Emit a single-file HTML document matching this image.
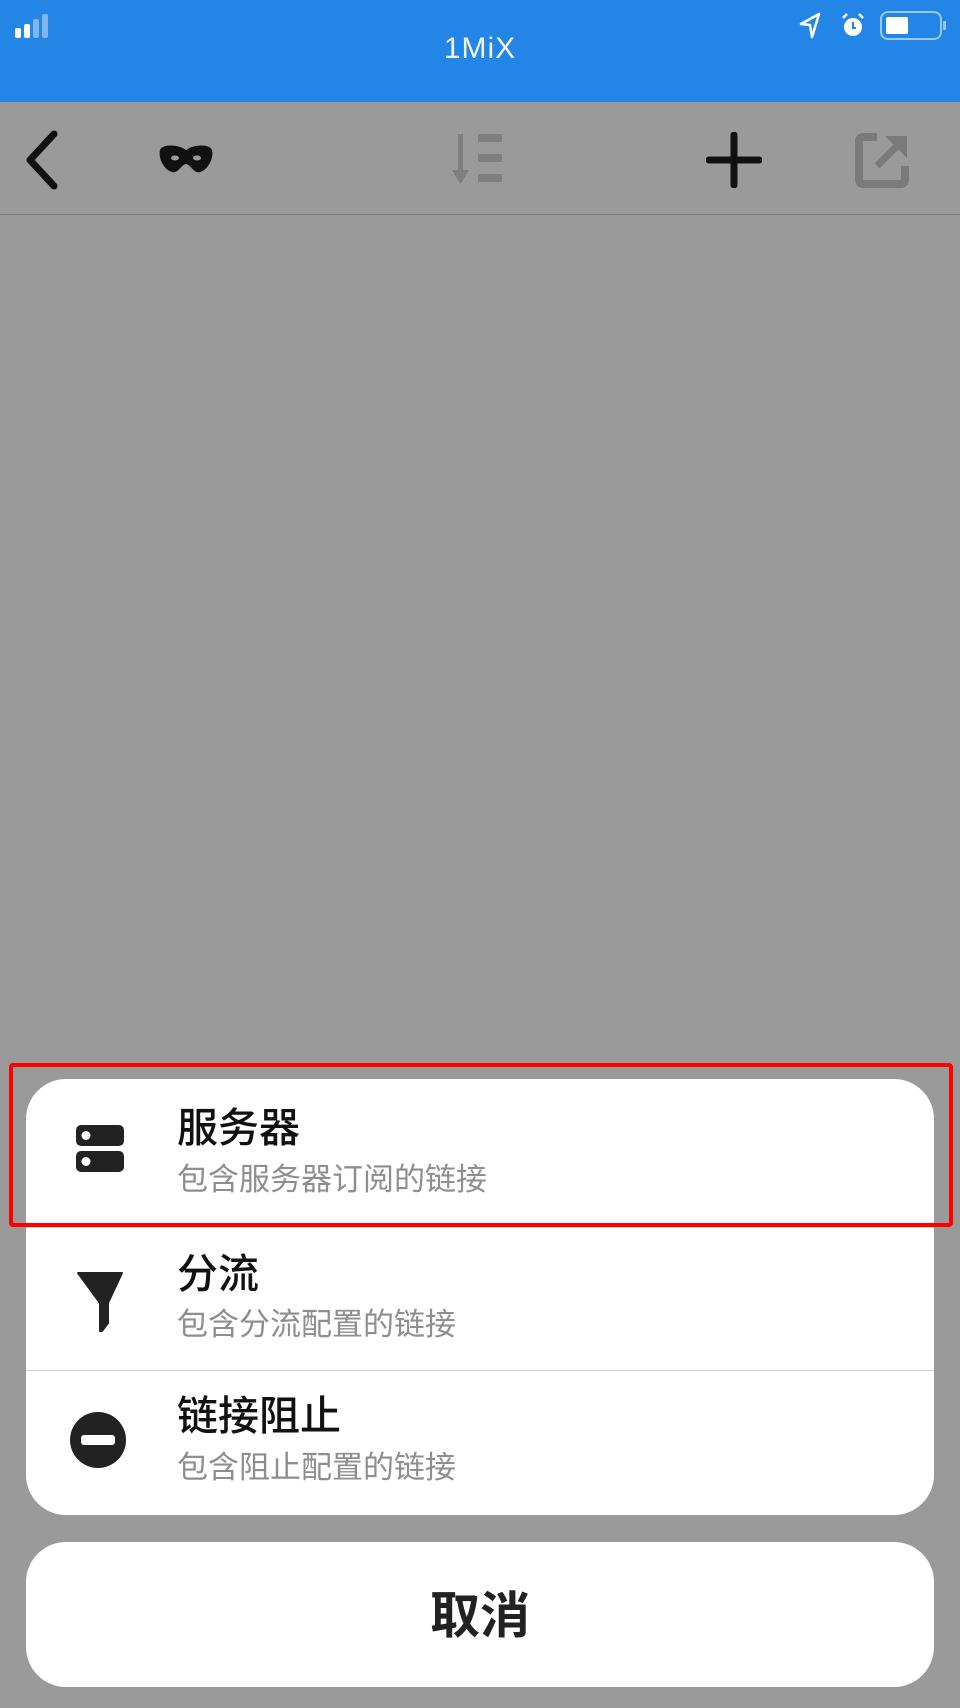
<!DOCTYPE html>
<html><head><meta charset="utf-8"><style>
*{margin:0;padding:0;box-sizing:border-box}
body{width:960px;height:1708px;background:#9a9a9a;position:relative;overflow:hidden;font-family:"Liberation Sans","Noto Sans CJK SC",sans-serif}
.hdr{position:absolute;left:0;top:0;width:960px;height:102px;background:#2386e6}
.ttl{position:absolute;left:0;width:960px;top:32px;text-align:center;color:#f2f2f2;font-size:30px;letter-spacing:1px}
.tb{position:absolute;top:102px;left:0;width:960px;height:113px;border-bottom:1px solid #7a7a7a}
.card{position:absolute;left:26px;width:908px;background:#fff;border-radius:40px}
.row{position:absolute;left:0;width:908px}
.t{position:absolute;left:151px;font-size:41px;color:#111;font-weight:500;line-height:1.3}
.s{position:absolute;left:151px;font-size:31px;color:#8e8e8e;line-height:1.2}
.div{position:absolute;left:0;width:908px;height:1px;background:#d0d0d0}
</style></head><body>
<div class="hdr">
 <svg style="position:absolute;left:15px;top:14px" width="42" height="24"><rect x="0" y="14" width="6" height="10" rx="2" fill="#fff"/><rect x="9" y="10" width="6" height="14" rx="2" fill="#fff"/><rect x="18" y="5" width="6" height="19" rx="2" fill="#7fb6f0"/><rect x="27" y="0" width="6" height="24" rx="2" fill="#7fb6f0"/></svg>
 <div class="ttl">1MiX</div>
 <svg style="position:absolute;left:798px;top:12px" width="24" height="28"><path d="M21 2 L3 12 L12 13 L14 25 Z" fill="none" stroke="#fff" stroke-width="2.5" stroke-linejoin="round"/></svg>
 <svg style="position:absolute;left:840px;top:12px" width="26" height="26"><circle cx="13" cy="15" r="9" fill="#fff"/><path d="M13 10v6h3" stroke="#2386e6" stroke-width="2" fill="none"/><path d="M3 6l4-4M23 6l-4-4" stroke="#fff" stroke-width="2.5"/></svg>
 <svg style="position:absolute;left:880px;top:11px" width="68" height="30"><rect x="1" y="1" width="60" height="27" rx="7" fill="none" stroke="#9cc6f3" stroke-width="2"/><rect x="6" y="6" width="22" height="17" rx="2" fill="#fff"/><rect x="63" y="10" width="3" height="9" rx="1" fill="#9cc6f3"/></svg>
</div>
<div class="tb">
 <svg style="position:absolute;left:22px;top:28px" width="40" height="60"><path d="M32 4 L8 30 L32 56" fill="none" stroke="#111" stroke-width="7" stroke-linecap="round" stroke-linejoin="round"/></svg>
 <svg style="position:absolute;left:158px;top:42px" width="56" height="32"><path d="M28 6 C20 0 4 0 2 6 C0 14 6 26 14 28 C20 30 24 20 28 20 C32 20 36 30 42 28 C50 26 56 14 54 6 C52 0 36 0 28 6 Z" fill="#111"/><ellipse cx="17" cy="14" rx="4" ry="2.5" fill="#9a9a9a"/><ellipse cx="39" cy="14" rx="4" ry="2.5" fill="#9a9a9a"/></svg>
 <svg style="position:absolute;left:452px;top:30px" width="56" height="56" fill="#7e7e7e"><rect x="6" y="2" width="5" height="40"/><path d="M0 38 L17 38 L8.5 52 Z"/><rect x="26" y="2" width="24" height="8" rx="2"/><rect x="26" y="22" width="24" height="8" rx="2"/><rect x="26" y="42" width="24" height="8" rx="2"/></svg>
 <svg style="position:absolute;left:706px;top:30px" width="56" height="56"><path d="M28 3v50M3 28h50" stroke="#111" stroke-width="7" stroke-linecap="round"/></svg>
 <svg style="position:absolute;left:855px;top:30px" width="56" height="56"><path d="M22 5 H8 a4 4 0 0 0 -4 4 V48 a4 4 0 0 0 4 4 H46 a4 4 0 0 0 4 -4 V34" fill="none" stroke="#7a7a7a" stroke-width="8"/><path d="M22 34 L46 10" stroke="#7a7a7a" stroke-width="7"/><path d="M30 4 H52 V26 Z" fill="#7a7a7a"/></svg>
</div>
<div class="card" style="top:1079px;height:436px">
 <div class="row" style="top:0">
  <svg style="position:absolute;left:50px;top:46px" width="48" height="48"><rect x="0" y="0" width="48" height="21" rx="5" fill="#222"/><rect x="0" y="26" width="48" height="21" rx="5" fill="#222"/><circle cx="10" cy="10.5" r="4.5" fill="#fff"/><circle cx="10" cy="36.5" r="4.5" fill="#fff"/></svg>
  <div class="t" style="top:23px">服务器</div>
  <div class="s" style="top:82px">包含服务器订阅的链接</div>
 </div>
 <div class="div" style="top:148px"></div>
 <div class="row" style="top:148px">
  <svg style="position:absolute;left:50px;top:42px" width="48" height="66"><path d="M2 4 H46 L32 34 V54 L26 62 H24 V34 Z" fill="#222" stroke="#222" stroke-width="2" stroke-linejoin="round"/></svg>
  <div class="t" style="top:21px">分流</div>
  <div class="s" style="top:79px">包含分流配置的链接</div>
 </div>
 <div class="div" style="top:291px"></div>
 <div class="row" style="top:291px">
  <svg style="position:absolute;left:44px;top:42px" width="56" height="56"><circle cx="28" cy="28" r="28" fill="#222"/><rect x="11" y="23" width="34" height="10" rx="3" fill="#fff"/></svg>
  <div class="t" style="top:20px">链接阻止</div>
  <div class="s" style="top:79px">包含阻止配置的链接</div>
 </div>
</div>
<div style="position:absolute;left:9px;top:1063px;width:944px;height:164px;border:4px solid #f00;border-radius:4px"></div>
<div class="card" style="top:1542px;height:145px">
 <div style="position:absolute;left:0;width:908px;top:42px;text-align:center;font-size:50px;font-weight:bold;color:#222;line-height:1.3">取消</div>
</div>
</body></html>
